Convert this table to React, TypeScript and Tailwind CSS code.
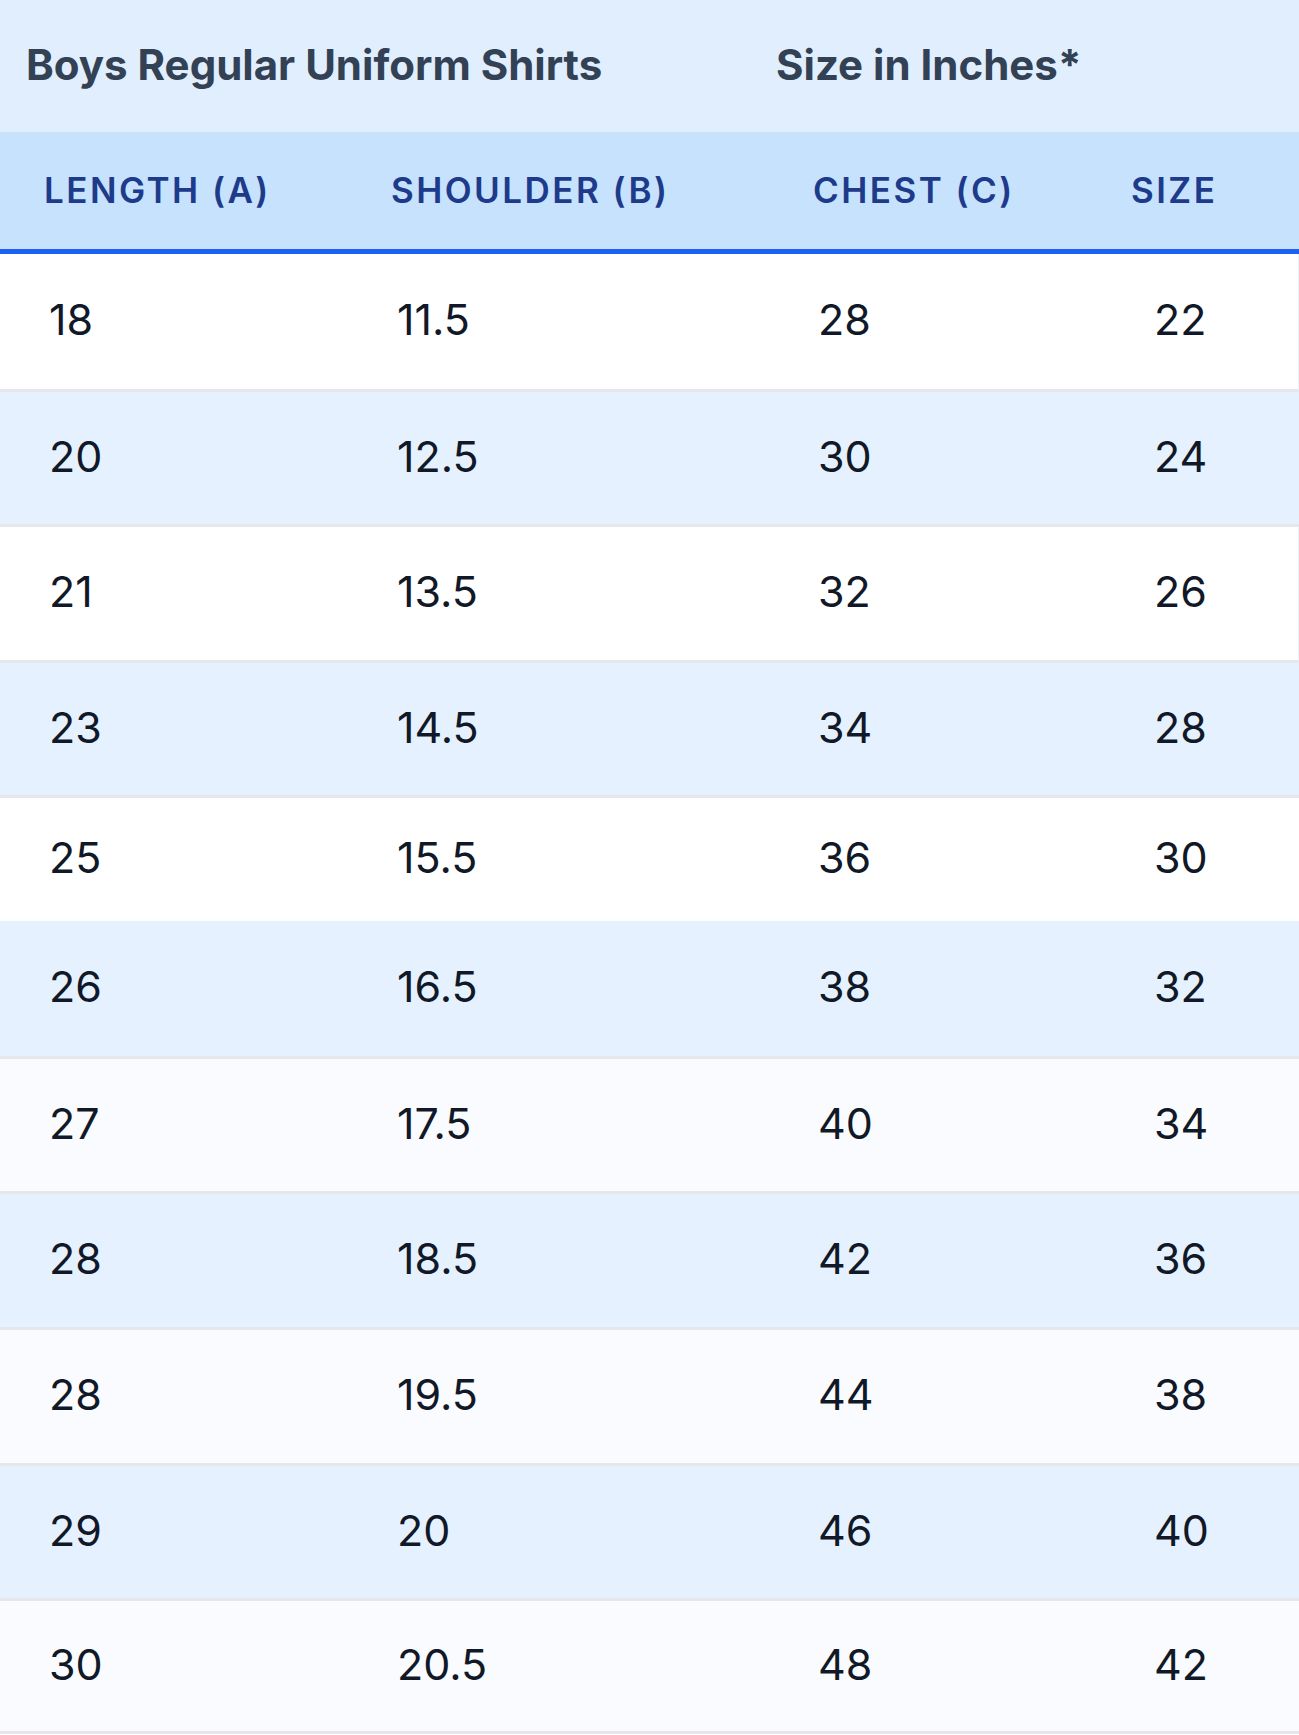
import React from 'react';

type Row = {
    length: string;
    shoulder: string;
    chest: string;
    size: string;
    h: string;
    bg: string;
    border: boolean;
};

const rows: Row[] = [
    { length: '18', shoulder: '11.5', chest: '28', size: '22', h: 'h-[135px]', bg: 'bg-white border-r border-r-[#eef2f8]', border: true },
    { length: '20', shoulder: '12.5', chest: '30', size: '24', h: 'h-[132px]', bg: 'bg-[#e5f1fe]', border: true },
    { length: '21', shoulder: '13.5', chest: '32', size: '26', h: 'h-[133px]', bg: 'bg-white border-r border-r-[#eef2f8]', border: true },
    { length: '23', shoulder: '14.5', chest: '34', size: '28', h: 'h-[132px]', bg: 'bg-[#e5f1fe]', border: true },
    { length: '25', shoulder: '15.5', chest: '36', size: '30', h: 'h-[123px]', bg: 'bg-white', border: false },
    { length: '26', shoulder: '16.5', chest: '38', size: '32', h: 'h-[135px]', bg: 'bg-[#e5f1fe]', border: true },
    { length: '27', shoulder: '17.5', chest: '40', size: '34', h: 'h-[132px]', bg: 'bg-[#f9fbfe]', border: true },
    { length: '28', shoulder: '18.5', chest: '42', size: '36', h: 'h-[133px]', bg: 'bg-[#e5f1fe]', border: true },
    { length: '28', shoulder: '19.5', chest: '44', size: '38', h: 'h-[133px]', bg: 'bg-[#f9fbfe]', border: true },
    { length: '29', shoulder: '20', chest: '46', size: '40', h: 'h-[132px]', bg: 'bg-[#e5f1fe]', border: true },
    { length: '30', shoulder: '20.5', chest: '48', size: '42', h: 'h-[130px]', bg: 'bg-[#f9fbfe]', border: true },
];

const cols = 'grid grid-cols-[348px_422px_317px_1fr]';

export default function App() {
    return (
        <div className="w-[1299px] h-[1735px] overflow-hidden bg-white font-['Inter',sans-serif]">
            {/* Title bar */}
            <div className="grid grid-cols-[750px_1fr] h-[132px] bg-[#e0eefe] text-[#334155] text-[42px] font-bold items-center pb-[3px]">
                <div className="pl-[26px]">Boys Regular Uniform Shirts</div>
                <div className="pl-[26px]">Size in Inches*</div>
            </div>

            {/* Column headers */}
            <div className={`${cols} h-[122px] bg-[#c6e2fd] border-b-[5px] border-[#1c60f6] items-center text-[#1e3a8a] text-[35px] font-semibold uppercase tracking-[0.07em]`}>
                <div className="pl-[44px]">Length (A)</div>
                <div className="pl-[43px]">Shoulder (B)</div>
                <div className="pl-[43px]">Chest (C)</div>
                <div className="pl-[44px]">Size</div>
            </div>

            {/* Body */}
            {rows.map((r, i) => (
                <div
                    key={i}
                    className={`${cols} ${r.h} ${r.bg} ${r.border ? 'border-b-[3px] border-b-[#e5e7eb]' : ''} box-content items-center pb-0 text-[#111827] text-[43px]`}
                >
                    <div className="pl-[49px] -mt-[4px]">{r.length}</div>
                    <div className="pl-[49px] -mt-[4px]">{r.shoulder}</div>
                    <div className="pl-[48px] -mt-[4px]">{r.chest}</div>
                    <div className="pl-[67px] -mt-[4px]">{r.size}</div>
                </div>
            ))}
        </div>
    );
}
